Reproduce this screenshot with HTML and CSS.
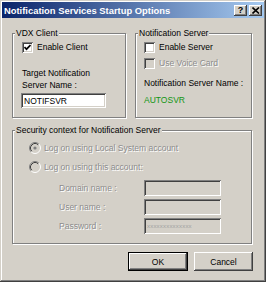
FILE: index.html
```html
<!DOCTYPE html>
<html>
<head>
<meta charset="utf-8">
<link rel="stylesheet" href="styles.css">
</head>
<body>
<div class="window">
  <div class="titlebar">
    <span class="title">Notification Services Startup Options</span>
    <div class="tbtns">
      <span class="tbtn help">?</span>
      <span class="tbtn"><svg width="8" height="7" viewBox="0 0 8 7"><path d="M0.5 0.5 L7 6.5 M7 0.5 L0.5 6.5" stroke="#000" stroke-width="1.6" fill="none"/></svg></span>
    </div>
  </div>
  <div class="client">
    <div class="row1">
      <fieldset class="group g-vdx">
        <legend>VDX Client</legend>
        <div class="check first">
          <span class="box"><svg width="7" height="7" viewBox="0 0 7 7"><path d="M0.5 3 L2.5 5.2 L6.5 1" stroke="#000" stroke-width="1.7" fill="none"/></svg></span>
          <span>Enable Client</span>
        </div>
        <div class="lbl2">Target Notification<br>Server Name :</div>
        <div class="edit white">NOTIFSVR</div>
      </fieldset>
      <fieldset class="group g-ns">
        <legend>Notification Server</legend>
        <div class="check first">
          <span class="box"></span>
          <span>Enable Server</span>
        </div>
        <div class="check second disabled">
          <span class="box grey"></span>
          <span>Use Voice Card</span>
        </div>
        <div class="srvlbl">Notification Server Name :</div>
        <div class="srvname">AUTOSVR</div>
      </fieldset>
    </div>
    <fieldset class="group g-sec">
      <legend>Security context for Notification Server</legend>
      <div class="radio r1 disabled">
        <svg width="12" height="12" viewBox="0 0 12 12"><circle cx="6" cy="6" r="5" fill="#d4d0c8"/><path d="M2.11 9.89 A5.5 5.5 0 0 1 9.89 2.11" stroke="#808080" fill="none"/><path d="M9.89 2.11 A5.5 5.5 0 0 1 2.11 9.89" stroke="#fff" fill="none"/><path d="M2.82 9.18 A4.5 4.5 0 0 1 9.18 2.82" stroke="#404040" fill="none"/><circle cx="6" cy="6" r="1.6" fill="#808080"/></svg>
        <span>Log on using Local System account</span>
      </div>
      <div class="radio r2 disabled">
        <svg width="12" height="12" viewBox="0 0 12 12"><circle cx="6" cy="6" r="5" fill="#d4d0c8"/><path d="M2.11 9.89 A5.5 5.5 0 0 1 9.89 2.11" stroke="#808080" fill="none"/><path d="M9.89 2.11 A5.5 5.5 0 0 1 2.11 9.89" stroke="#fff" fill="none"/><path d="M2.82 9.18 A4.5 4.5 0 0 1 9.18 2.82" stroke="#404040" fill="none"/></svg>
        <span>Log on using this account:</span>
      </div>
      <div class="creds">
        <span class="clbl">Domain name :</span><span class="edit"></span>
        <span class="clbl">User name :</span><span class="edit"></span>
        <span class="clbl">Password :</span><span class="edit pw">xxxxxxxxxxxxxx</span>
      </div>
    </fieldset>
    <div class="buttons">
      <div class="btn default"><span>OK</span></div>
      <div class="btn"><span>Cancel</span></div>
    </div>
  </div>
</div>
</body>
</html>
```
FILE: styles.css
```css
* { box-sizing: border-box; }
html, body { margin: 0; padding: 0; }
body {
  width: 266px;
  height: 282px;
  overflow: hidden;
  background: #d4d0c8;
  font-family: "Liberation Sans", Arial, sans-serif;
  font-size: 8.5px;
  color: #000;
}
.window {
  width: 266px;
  height: 282px;
  background: #d4d0c8;
  padding: 2px;
  display: flex;
  flex-direction: column;
  box-shadow: inset -1px -1px #404040, inset 1px 1px #d4d0c8, inset -2px -2px #808080, inset 2px 2px #fff;
}
.titlebar {
  height: 16px;
  background: linear-gradient(to right, #0a246a, #a6caf0);
  display: flex;
  align-items: center;
  justify-content: space-between;
  padding: 0 2px 0 2px;
}
.title {
  color: #fff;
  font-weight: bold;
  font-size: 9.4px;
  white-space: nowrap;
}
.tbtns { display: flex; gap: 2px; }
.tbtn {
  width: 13px;
  height: 11px;
  background: #d4d0c8;
  display: flex;
  align-items: center;
  justify-content: center;
  box-shadow: inset -1px -1px #404040, inset 1px 1px #fff, inset -2px -2px #808080;
}
.tbtn.help { font-weight: bold; font-size: 9px; line-height: 11px; }
.client {
  flex: 1;
  display: flex;
  flex-direction: column;
  padding: 0 12px 0 10px;
  white-space: nowrap;
}
.row1 {
  display: flex;
  gap: 9px;
  margin-top: 10px;
}
.group {
  margin: 0;
  min-width: 0;
  border: 1px solid #808080;
  box-shadow: inset 1px 1px #fff, 1px 1px #fff;
  padding: 0 8px;
}
.group legend {
  padding: 0 1px;
  margin-left: -6px;
  line-height: 11px;
  height: 11px;
  background: #d4d0c8;
}
.g-vdx { width: 114px; padding: 2px 8px 9px 8px; }
.g-ns { flex: 1; padding: 2px 8px 9px 8px; }
.check {
  display: flex;
  align-items: center;
  gap: 4px;
  height: 12px;
  line-height: 12px;
  padding-left: 1px;
}
.g-ns .check { padding-left: 0; }
.check.second { margin-top: 4px; }
.box {
  width: 11px;
  height: 11px;
  background: #fff;
  display: flex;
  align-items: center;
  justify-content: center;
  box-shadow: inset 1px 1px #808080, inset -1px -1px #fff, inset 2px 2px #404040, inset -2px -2px #d4d0c8;
}
.box.grey { background: #d4d0c8; }
.disabled { color: #8c8c8c; text-shadow: 1px 1px 0 #fff; }
.lbl2 { margin-top: 14px; line-height: 12px; padding-left: 1px; }
.edit {
  display: flex;
  align-items: center;
  background: #d4d0c8;
  box-shadow: inset 1px 1px #808080, inset -1px -1px #fff, inset 2px 2px #404040, inset -2px -2px #d4d0c8;
  padding-left: 3px;
}
.edit.white { background: #fff; }
.g-vdx .edit { margin-top: 2px; width: 85px; height: 15px; }
.srvlbl { margin-top: 8px; line-height: 12px; }
.srvname { margin-top: 5px; line-height: 12px; color: #129612; }
.g-sec { margin-top: 7px; padding: 5px 8px 9px 8px; }
.radio {
  display: flex;
  align-items: center;
  gap: 3px;
  height: 13px;
  padding-left: 8px;
}
.r2 { margin-top: 6px; }
.creds {
  display: grid;
  grid-template-columns: 85px 77px;
  row-gap: 3px;
  margin-top: 7px;
  margin-left: 38px;
}
.clbl { color: #8c8c8c; text-shadow: 1px 1px 0 #fff; display: flex; align-items: center; }
.creds .edit { height: 16px; }
.edit.pw { color: #a0a0a0; font-size: 6px; letter-spacing: 0.2px; }
.buttons {
  display: flex;
  justify-content: flex-end;
  gap: 6px;
  margin-top: 8px;
  margin-right: -1px;
}
.btn {
  width: 59px;
  height: 19px;
  display: flex;
  align-items: center;
  justify-content: center;
  box-shadow: inset -1px -1px #404040, inset 1px 1px #fff, inset -2px -2px #808080;
}
.btn.default {
  width: 60px;
  border: 1px solid #000;
  box-shadow: inset -1px -1px #404040, inset 1px 1px #fff, inset -2px -2px #808080;
}
```
